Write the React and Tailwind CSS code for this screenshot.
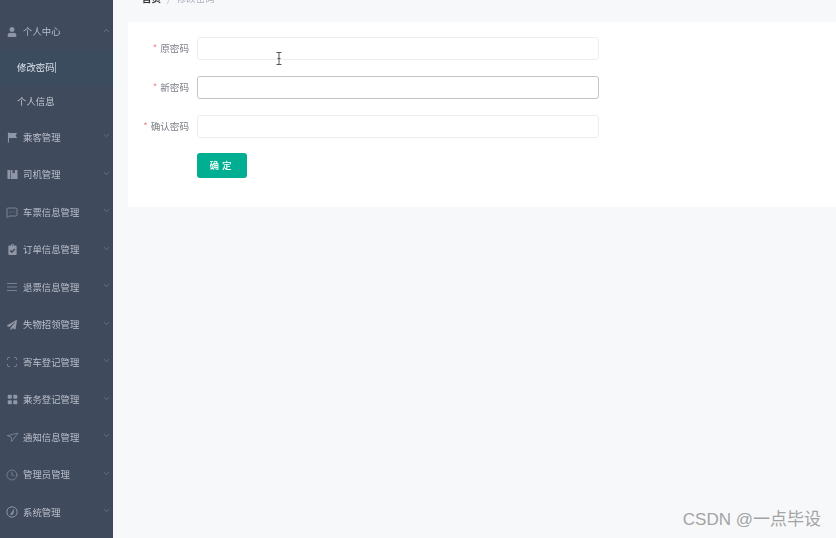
import { ChevronDown, ChevronUp, MessageSquareMore, AlignJustify, Scan, Navigation, Clock } from 'lucide-react';
import { FaUser, FaClipboardCheck, FaPaperPlane } from 'react-icons/fa';
import { BsGridFill } from 'react-icons/bs';

const FlagIcon = ({ className }) => (
  <svg viewBox="0 0 12 12" className={className} fill="currentColor">
    <path d="M1 0.5h1.2v11H1zM2.2 1H11L9.4 3.8 11 6.6H2.2z" />
  </svg>
);

const BookIcon = ({ className }) => (
  <svg viewBox="0 0 12 12" className={className} fill="currentColor">
    <path d="M0.5 1h3v10h-3zM4.2 1h1.9v4l1.2-1 1.2 1V1h3v10H4.2z" />
  </svg>
);

const DialIcon = ({ className }) => (
  <svg viewBox="0 0 12 12" className={className} fill="none" stroke="currentColor">
    <circle cx="6" cy="6" r="5.2" strokeWidth="1" />
    <path d="M4.4 8.6 8 3.2 6.8 8.4z" fill="currentColor" strokeWidth="0.5" />
  </svg>
);

const groupsTop = [
  { label: '乘客管理', icon: <FlagIcon className="w-[11px] h-[11px]" /> },
  { label: '司机管理', icon: <BookIcon className="w-[11px] h-[11px]" /> },
  { label: '车票信息管理', icon: <MessageSquareMore className="w-[13px] h-[13px]" strokeWidth={1.5} /> },
  { label: '订单信息管理', icon: <FaClipboardCheck className="w-[11px] h-[11px]" /> },
  { label: '退票信息管理', icon: <AlignJustify className="w-[12px] h-[12px]" strokeWidth={1.5} /> },
  { label: '失物招领管理', icon: <FaPaperPlane className="w-[10px] h-[10px]" /> },
  { label: '寄车登记管理', icon: <Scan className="w-[12px] h-[12px]" strokeWidth={1.5} /> },
  { label: '乘务登记管理', icon: <BsGridFill className="w-[11px] h-[11px]" /> },
  { label: '通知信息管理', icon: <Navigation className="w-[12px] h-[12px] rotate-12" strokeWidth={1.25} /> },
  { label: '管理员管理', icon: <Clock className="w-[12px] h-[12px]" strokeWidth={1.25} /> },
  { label: '系统管理', icon: <DialIcon className="w-[12px] h-[12px]" /> },
];

const fields = [
  { label: '原密码' },
  { label: '新密码', focused: true },
  { label: '确认密码' },
];

const MenuRow = ({ icon, label, open }) => (
  <div className="h-[37.5px] flex items-center pl-[6px] pr-[2px] text-[#b9bfca] shrink-0">
    <span className="w-[12px] flex justify-center text-[#8f97a6]">{icon}</span>
    <span className="ml-[5px] text-[9.4px] leading-none flex-1 whitespace-nowrap">{label}</span>
    {open ? (
      <ChevronUp className="w-[9px] h-[9px] text-[#7d8697] mb-[3px]" />
    ) : (
      <ChevronDown className="w-[9px] h-[9px] text-[#6f7a8c] mb-[3px]" />
    )}
  </div>
);

export default function App() {
  return (
    <div className="relative h-[538px] w-[836px] overflow-hidden flex bg-[#f7f8fa] font-['Noto_Sans_CJK_SC','Liberation_Sans',sans-serif]">
      {/* Sidebar */}
      <aside className="w-[113px] shrink-0 bg-[#404a5d] pt-[13px]">
        <div className="flex flex-col blur-[0.4px]">
          <MenuRow label="个人中心" open icon={<FaUser className="w-[10px] h-[10px]" />} />
          <div className="h-[34px] bg-[#3c4c5f] flex items-center pl-[17px] pb-[1px] text-[9.4px] text-[#dfe5ec]">
            修改密码<span className="w-px h-[11px] bg-[#aab1bc]" />
          </div>
          <div className="h-[34px] flex items-center pl-[17px] pb-[1px] text-[9.4px] text-[#c4cad4]">个人信息</div>
          {groupsTop.map((g) => (
            <MenuRow key={g.label} icon={g.icon} label={g.label} />
          ))}
        </div>
      </aside>

      {/* Main */}
      <main className="flex-1 min-w-0 pl-[15px]">
        <div className="h-[22px] overflow-hidden relative blur-[0.3px]">
          <div className="-mt-[9px] pl-[14px] flex items-center gap-[6px] text-[9.5px] leading-[14px]">
            <span className="font-bold text-[#303133]">首页</span>
            <span className="text-[#c0c4cc]">/</span>
            <span className="text-[#a9afbb]">修改密码</span>
          </div>
        </div>
        <div className="bg-white h-[185px] pt-[15px]">
          <div className="blur-[0.35px]">
            {fields.map((f) => (
              <div key={f.label} className="flex items-center h-[23px] mb-[16px]">
                <label className="w-[69px] pr-[8px] text-right text-[9.6px] text-[#7a7d85] whitespace-nowrap">
                  <span className="text-[#f08a8a] mr-[3px]">*</span>
                  {f.label}
                </label>
                <div
                  className={`w-[402px] h-[23px] rounded-[3px] bg-white border ${
                    f.focused ? 'border-[#c4c4c4]' : 'border-[#ebedf0]'
                  }`}
                />
              </div>
            ))}
            <div className="pl-[69px] -mt-[1px]">
              <button className="block w-[50px] h-[25px] rounded-[3px] bg-[#00af91] text-white text-[9.5px] font-medium tracking-[3px]">
                确定
              </button>
            </div>
          </div>
        </div>
      </main>

      {/* I-beam cursor */}
      <svg className="absolute left-[275px] top-[52px] w-[8px] h-[13px]" viewBox="0 0 8 13" fill="none" stroke="#555" strokeWidth="1">
        <path d="M1.5.5h5M4 .5v12M1.5 12.5h5M2.5 6.5h3" />
      </svg>

      {/* Watermark */}
      <div className="absolute right-[15px] top-[509px] text-[17px] leading-[22px] text-[#a3a3a3] font-['Liberation_Sans','Noto_Sans_CJK_SC',sans-serif] whitespace-nowrap">
        CSDN @一点毕设
      </div>
    </div>
  );
}
